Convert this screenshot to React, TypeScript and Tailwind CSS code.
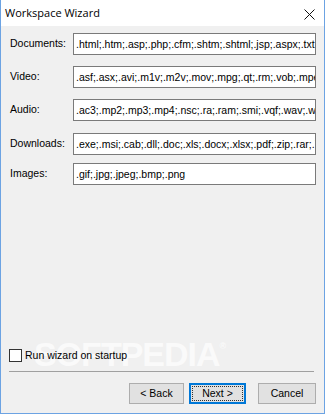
import React from "react";

const rows = [
	{ label: "Documents:", value: ".html;.htm;.asp;.php;.cfm;.shtm;.shtml;.jsp;.aspx;.txt;.rtf;.xml", mt: "mt-0" },
	{ label: "Video:", value: ".asf;.asx;.avi;.m1v;.m2v;.mov;.mpg;.qt;.rm;.vob;.mpeg;.wmv", mt: "mt-[11px]" },
	{ label: "Audio:", value: ".ac3;.mp2;.mp3;.mp4;.nsc;.ra;.ram;.smi;.vqf;.wav;.wma", mt: "mt-[11px]" },
	{ label: "Downloads:", value: ".exe;.msi;.cab;.dll;.doc;.xls;.docx;.xlsx;.pdf;.zip;.rar;.7z", mt: "mt-[12px]" },
	{ label: "Images:", value: ".gif;.jpg;.jpeg;.bmp;.png", mt: "mt-[8px]" },
];

const App: React.FC = () => {
	return (
		<div
			className="relative w-[325px] h-[414px] flex flex-col border-x border-b border-[#6ca3e3] overflow-hidden"
			style={{ fontFamily: '"Liberation Sans", Arial, sans-serif' }}
		>
			{/* title bar */}
			<div className="h-[26px] shrink-0 bg-white flex items-center justify-between pl-[4px] pr-[9px]">
				<span
					className="text-[11px] text-black"
					style={{ fontFamily: '"Open Sans", "Noto Sans", sans-serif' }}
				>
					Workspace Wizard
				</span>
				<svg width="11" height="11" viewBox="0 0 11 11" className="mt-[2px]">
					<path d="M0.5 0.5 L10.5 10.5 M10.5 0.5 L0.5 10.5" stroke="#111" strokeWidth="1" />
				</svg>
			</div>

			{/* body */}
			<div className="relative flex-1 bg-[#f0f0f0] flex flex-col px-[8px] pt-[7px] pb-[9px] text-[10.5px] text-black">
				{/* watermark, sits behind the controls */}
				<div className="pointer-events-none select-none absolute left-[33px] top-[303px] text-[34px] font-bold tracking-[-1px] text-white/70">
					SOFTPEDIA<sup className="text-[9px] align-super">®</sup>
				</div>

				{rows.map((row) => (
					<div key={row.label} className={`relative flex items-start ${row.mt}`}>
						<div className="w-[64px] shrink-0 pl-[1px] pt-[4px] leading-[13px]">{row.label}</div>
						<div className="flex-1 h-[22px] bg-white border border-[#7a7a7a] pl-[2px] pr-[1px] flex items-center overflow-hidden whitespace-nowrap leading-[13px]">
							{row.value}
						</div>
					</div>
				))}

				<div className="flex-1" />

				<label className="relative flex items-center gap-[3px] leading-[13px]">
					<span className="w-[13px] h-[13px] bg-white border border-[#333]" />
					<span>Run wizard on startup</span>
				</label>

				<div className="relative mt-[9px] h-px bg-[#a0a0a0] mr-[2px]" />

				<div className="relative mt-[11px] flex justify-end">
					<button className="w-[55px] h-[21px] bg-[#e1e1e1] border border-[#adadad] leading-[13px]">
						&lt; Back
					</button>
					<button className="ml-[5px] w-[57px] h-[21px] bg-[#e1e1e1] border-2 border-[#0078d7] p-[1px] leading-[13px]">
						<span className="flex h-full w-full items-center justify-center border border-dotted border-[#333]">
							Next &gt;
						</span>
					</button>
					<button className="ml-[12px] w-[58px] h-[21px] bg-[#e1e1e1] border border-[#adadad] leading-[13px]">
						Cancel
					</button>
				</div>
			</div>
		</div>
	);
};

export default App;
